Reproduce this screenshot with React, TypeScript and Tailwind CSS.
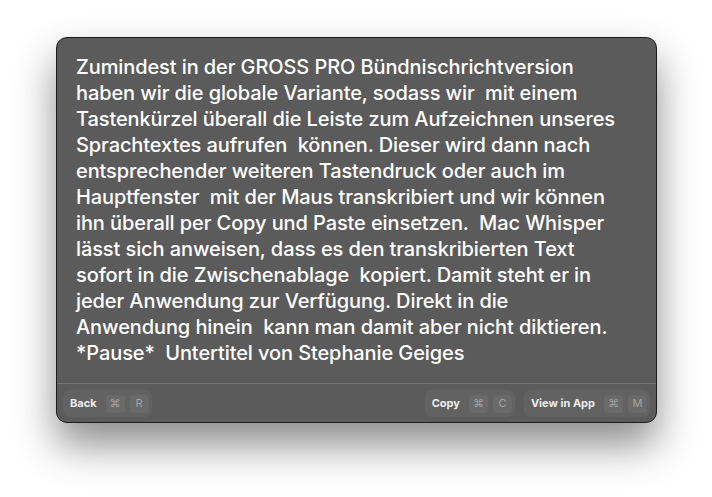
import React from "react";

const lines = [
  "Zumindest in der GROSS PRO Bündnischrichtversion",
  "haben wir die globale Variante, sodass wir  mit einem",
  "Tastenkürzel überall die Leiste zum Aufzeichnen unseres",
  "Sprachtextes aufrufen  können. Dieser wird dann nach",
  "entsprechender weiteren Tastendruck oder auch im",
  "Hauptfenster  mit der Maus transkribiert und wir können",
  "ihn überall per Copy und Paste einsetzen.  Mac Whisper",
  "lässt sich anweisen, dass es den transkribierten Text",
  "sofort in die Zwischenablage  kopiert. Damit steht er in",
  "jeder Anwendung zur Verfügung. Direkt in die",
  "Anwendung hinein  kann man damit aber nicht diktieren.",
  "*Pause*  Untertitel von Stephanie Geiges",
];

function Key({ children }: { children: React.ReactNode }) {
  return (
    <span className="flex h-[18px] min-w-[19px] items-center justify-center rounded-[4px] bg-[#6a6a6a] px-1 text-[11px] text-[#a3a3a3]">
      {children}
    </span>
  );
}

function Action({ label, k }: { label: string; k: string }) {
  return (
    <div className="flex h-[27px] items-center gap-[5px] rounded-[7px] bg-[#626262] pl-[7px] pr-[3px]">
      <span className="mr-[4px] text-[11px] font-bold text-[#ececec]">{label}</span>
      <Key>⌘</Key>
      <Key>{k}</Key>
    </div>
  );
}

export default function App() {
  return (
    <div
      className="h-[497px] w-[712px] bg-white pl-[56px] pt-[37px]"
      style={{ fontFamily: "Inter, 'Liberation Sans', sans-serif" }}
    >
      <div className="flex h-[386px] w-[601px] flex-col overflow-hidden rounded-[11px] border border-[#1c1c1c] bg-[#5b5b5b] shadow-[0_22px_40px_rgba(0,0,0,0.45)]">
        <div className="flex-1 pl-[19px] pr-[10px] pt-[16px] text-[20px] font-medium leading-[26px] tracking-[-0.1px] text-white">
          {lines.map((l, i) => (
            <div key={i} className="whitespace-pre">
              {l}
            </div>
          ))}
        </div>
        <div className="h-px bg-[#747474]" />
        <div className="flex items-center gap-[9px] px-[6px] pb-[5px] pt-[6px]">
          <Action label="Back" k="R" />
          <div className="flex-1" />
          <Action label="Copy" k="C" />
          <Action label="View in App" k="M" />
        </div>
      </div>
    </div>
  );
}
